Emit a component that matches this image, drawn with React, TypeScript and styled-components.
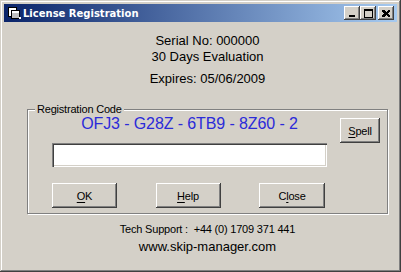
import React from 'react';
import styled, { createGlobalStyle } from 'styled-components';

const GlobalStyle = createGlobalStyle`
    html, body {
        margin: 0;
        padding: 0;
        background: #d4d0c8;
    }
    * {
        box-sizing: border-box;
    }
`;

const Window = styled.div`
    width: 401px;
    height: 272px;
    background: #d4d0c8;
    padding: 4px;
    display: flex;
    flex-direction: column;
    box-shadow:
        inset -1px -1px 0 #404040,
        inset 1px 1px 0 #d4d0c8,
        inset -2px -2px 0 #808080,
        inset 2px 2px 0 #ffffff;
    font-family: "Liberation Sans", Arial, sans-serif;
    color: #000;
`;

const TitleBar = styled.div`
    height: 18px;
    display: flex;
    align-items: center;
    padding: 0 3px 0 3px;
    background: linear-gradient(to right, #0a246a, #a6caf0);
`;

const TitleIcon = styled.svg`
    width: 14px;
    height: 14px;
    margin-right: 2px;
    flex-shrink: 0;
`;

const TitleText = styled.div`
    flex: 1;
    color: #ffffff;
    font-family: "DejaVu Sans", Verdana, sans-serif;
    font-weight: bold;
    font-size: 10px;
    white-space: nowrap;
`;

const CaptionButton = styled.div<{ $gap?: number }>`
    width: 16px;
    height: 14px;
    margin-left: ${p => p.$gap ?? 0}px;
    background: #d4d0c8;
    display: flex;
    align-items: center;
    justify-content: center;
    box-shadow:
        inset -1px -1px 0 #404040,
        inset 1px 1px 0 #ffffff,
        inset -2px -2px 0 #808080;
`;

const Client = styled.div`
    flex: 1;
    padding: 11px 0 0 23px;
`;

const Content = styled.div`
    width: 361px;
    display: flex;
    flex-direction: column;
`;

const InfoLine = styled.div<{ $space?: number }>`
    font-size: 13px;
    line-height: 16px;
    text-align: center;
    margin-top: ${p => p.$space ?? 0}px;
`;

const GroupBox = styled.div`
    position: relative;
    margin-top: 22px;
    border: 1px solid #808080;
    box-shadow: inset 1px 1px 0 #ffffff, 1px 1px 0 #ffffff;
    padding: 4px 0 5px 24px;
    display: flex;
`;

const GroupLabel = styled.div`
    position: absolute;
    top: -8px;
    left: 7px;
    padding: 0 2px;
    background: #d4d0c8;
    font-size: 11px;
    letter-spacing: -0.2px;
    line-height: 14px;
`;

const MainCol = styled.div`
    width: 275px;
    display: flex;
    flex-direction: column;
`;

const CodeText = styled.div`
    height: 19px;
    line-height: 19px;
    font-size: 16px;
    color: #2b2bd9;
    text-align: center;
    white-space: nowrap;
    letter-spacing: -0.1px;
`;

const CodeInput = styled.input`
    margin-top: 10px;
    height: 24px;
    width: 100%;
    border: none;
    outline: none;
    background: #ffffff;
    padding: 2px 4px;
    font-family: "Liberation Sans", Arial, sans-serif;
    font-size: 13px;
    box-shadow:
        inset 1px 1px 0 #808080,
        inset 2px 2px 0 #404040,
        inset -1px -1px 0 #ffffff,
        inset -2px -2px 0 #d4d0c8;
`;

const ButtonRow = styled.div`
    margin-top: 16px;
    padding-right: 2px;
    display: flex;
    justify-content: space-between;
`;

const PushButton = styled.div<{ $w?: number }>`
    width: ${p => p.$w ?? 65}px;
    height: 25px;
    display: flex;
    align-items: center;
    justify-content: center;
    font-size: 11px;
    letter-spacing: -0.2px;
    background: #d4d0c8;
    box-shadow:
        inset -1px -1px 0 #404040,
        inset 1px 1px 0 #ffffff,
        inset -2px -2px 0 #808080;
    u {
        text-decoration: underline;
        text-underline-offset: 2px;
    }
`;

const SideCol = styled.div`
    margin: 4px 0 0 13px;
`;

const Footer = styled.div`
    margin-top: 7px;
    display: flex;
    flex-direction: column;
    align-items: center;
`;

const SupportLine = styled.div`
    font-size: 11px;
    letter-spacing: -0.2px;
    line-height: 16px;
    white-space: pre;
`;

const WebLine = styled.div`
    margin-top: 2px;
    font-size: 13px;
    line-height: 16px;
`;

const App = () => {
    return (
        <Window>
            <GlobalStyle />
            <TitleBar>
                <TitleIcon viewBox="0 0 14 14" shapeRendering="crispEdges">
                    <rect x="1.5" y="1.5" width="8" height="9" fill="#ffffff" stroke="#000" />
                    <rect x="4.5" y="4.5" width="8" height="8" fill="#c0c0c0" stroke="#000" />
                    <rect x="5" y="5" width="7" height="2" fill="#ffffff" />
                    <rect x="12" y="11" width="2" height="2" fill="#ffffff" />
                </TitleIcon>
                <TitleText>License Registration</TitleText>
                <CaptionButton>
                    <svg width="8" height="7" viewBox="0 0 8 7" shapeRendering="crispEdges">
                        <rect x="1" y="5" width="6" height="2" fill="#000" />
                    </svg>
                </CaptionButton>
                <CaptionButton>
                    <svg width="9" height="9" viewBox="0 0 9 9" shapeRendering="crispEdges">
                        <rect x="0.5" y="0.5" width="8" height="8" fill="none" stroke="#000" />
                        <rect x="0" y="1" width="9" height="1" fill="#000" />
                    </svg>
                </CaptionButton>
                <CaptionButton $gap={2}>
                    <svg width="8" height="7" viewBox="0 0 8 7" shapeRendering="crispEdges">
                        <path d="M0 0h2l2 2 2-2h2v1l-2 2.5 2 2.5v1h-2l-2-2-2 2h-2v-1l2-2.5-2-2.5z" fill="#000" />
                    </svg>
                </CaptionButton>
            </TitleBar>
            <Client>
                <Content>
                    <InfoLine>Serial No: 000000</InfoLine>
                    <InfoLine>30 Days Evaluation</InfoLine>
                    <InfoLine $space={6}>Expires: 05/06/2009</InfoLine>

                    <GroupBox>
                        <GroupLabel>Registration Code</GroupLabel>
                        <MainCol>
                            <CodeText>OFJ3 - G28Z - 6TB9 - 8Z60 - 2</CodeText>
                            <CodeInput type="text" />
                            <ButtonRow>
                                <PushButton><u>O</u>K</PushButton>
                                <PushButton><u>H</u>elp</PushButton>
                                <PushButton $w={66}>C<u>l</u>ose</PushButton>
                            </ButtonRow>
                        </MainCol>
                        <SideCol>
                            <PushButton $w={40}><u>S</u>pell</PushButton>
                        </SideCol>
                    </GroupBox>

                    <Footer>
                        <SupportLine>{'Tech Support :  +44 (0) 1709 371 441'}</SupportLine>
                        <WebLine>www.skip-manager.com</WebLine>
                    </Footer>
                </Content>
            </Client>
        </Window>
    );
};

export default App;
